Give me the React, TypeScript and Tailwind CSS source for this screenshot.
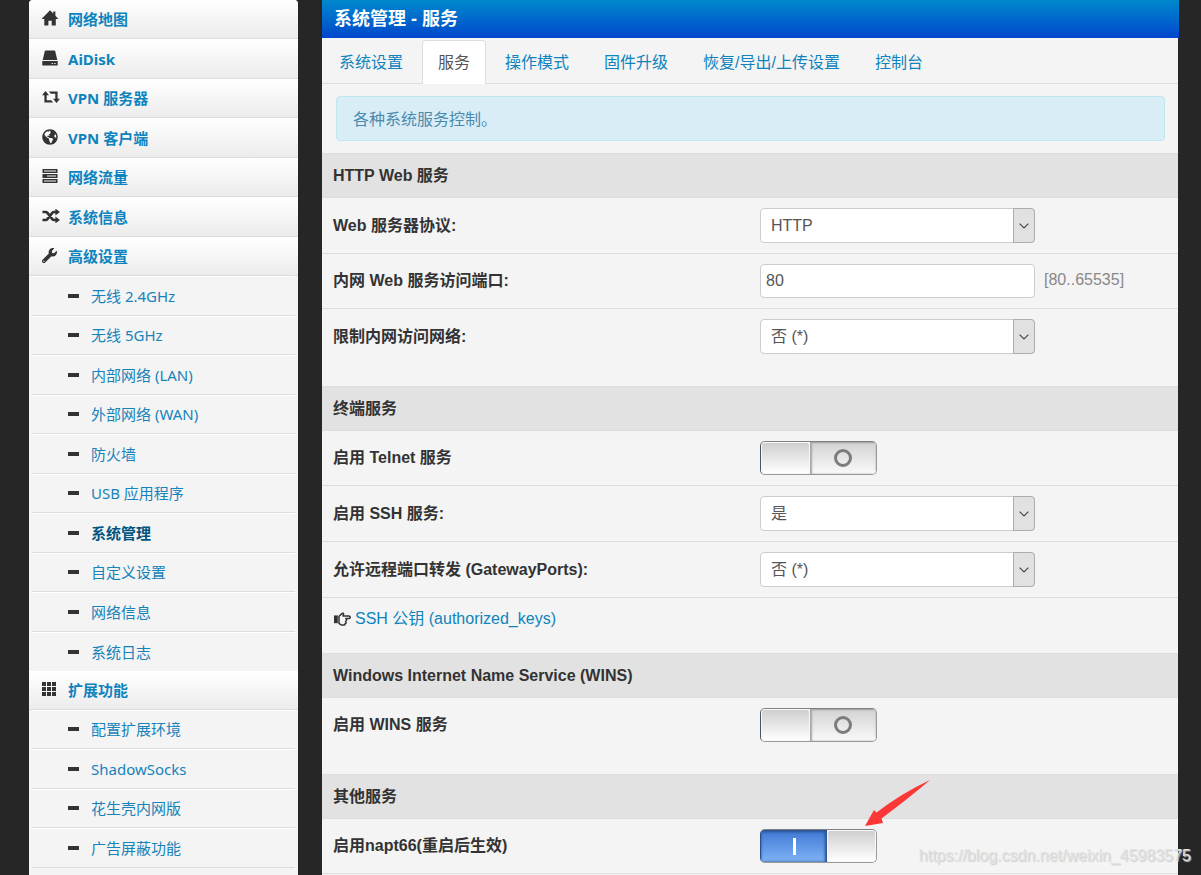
import React from 'react';
import { FaGlobeAmericas, FaWrench } from 'react-icons/fa';

const mainFont = "font-['Liberation_Sans','Noto_Sans_CJK_SC',sans-serif]";
const sideFont = "font-['Noto_Sans','Noto_Sans_CJK_SC',sans-serif]";

function HomeIcon() {
  return (
    <svg viewBox="0 0 16 16" className="h-4 w-4" fill="#333" aria-hidden="true">
      <path d="M8 .3 11.2 3.5V1.4h2.2v4.3L16 8.4V9h-2.2v6.6H9.7v-4.8H6.4v4.8H2.3V9H0v-.6z" />
    </svg>
  );
}

function DiskIcon() {
  return (
    <svg viewBox="0 0 16 16" className="h-4 w-4" fill="#333" aria-hidden="true">
      <path d="M2.8 1.2Q3 .5 3.6.5h8.8q.6 0 .8.7L15.3 10H.7z" />
      <path fillRule="evenodd" d="M.3 11h15.4v4.6H.3zM9.7 12.9v1.1h1.3v-1.1zM12.3 12.9v1.1h1.3v-1.1z" />
    </svg>
  );
}

function RetweetIcon() {
  return (
    <svg viewBox="0 0 18 12" className="h-3 w-[18px]" fill="#333" aria-hidden="true">
      <path d="M3.5 0 7 4.2H4.7v5h4.6l1.8 2.3H2.4V4.2H0z" />
      <path d="M14.5 12 11 7.8h2.3v-5H8.7L6.9.5h8.7v7.3H18z" />
    </svg>
  );
}

function BarsIcon() {
  return (
    <svg viewBox="0 0 16 16" className="h-4 w-4" fill="#333" aria-hidden="true">
      <path fillRule="evenodd" d="M.5 1h15v4H.5zM2 2.6v.8h12v-.8zM.5 6h15v4H.5zM5 7.6v.8h9v-.8zM.5 11h15v4H.5zM2 12.6v.8h12v-.8z" />
    </svg>
  );
}

function ShuffleIcon() {
  return (
    <svg viewBox="0 0 18 14" className="h-[14px] w-[18px]" aria-hidden="true">
      <path d="M.5 3h3.2q1 0 1.7.9l4.9 6.2q.7.9 1.7.9h2.5M.5 11h3.2q1 0 1.7-.9l4.9-6.2q.7-.9 1.7-.9h2.5" fill="none" stroke="#333" strokeWidth="2.6" />
      <path d="M13.4-.4 18 3.1l-4.6 3.5zM13.4 7.4 18 10.9l-4.6 3.5z" fill="#333" />
    </svg>
  );
}

function GridIcon() {
  return (
    <svg viewBox="0 0 16 16" className="h-4 w-4" fill="#333" aria-hidden="true">
      <path d="M0 1h4v4H0zM5 1h4v4H5zM10 1h4v4h-4zM0 6h4v4H0zM5 6h4v4H5zM10 6h4v4h-4zM0 11h4v4H0zM5 11h4v4H5zM10 11h4v4h-4z" />
    </svg>
  );
}

function HandIcon() {
  return (
    <svg viewBox="0 0 17 14" className="h-[14px] w-[17px]" aria-hidden="true">
      <path d="M0 3.4h3.8v7.8H0z" fill="#333" />
      <path
        d="M5 4.2 8.2 1.4Q9.4.7 9.6 2.1L9 4h6q1.2.2 1.2 1.3T15 6.6h-3.2q1 .3.8 1.4t-1 1.2q.7.3.5 1.3t-1 1.1q.2 1.4-1.3 1.4H7.2L5 11.4z"
        fill="#f4f4f4"
        stroke="#333"
        strokeWidth="1.5"
        strokeLinejoin="round"
      />
    </svg>
  );
}

const topItems = [
  { label: '网络地图', icon: <HomeIcon /> },
  { label: 'AiDisk', icon: <DiskIcon /> },
  { label: 'VPN 服务器', icon: <RetweetIcon /> },
  { label: 'VPN 客户端', icon: <FaGlobeAmericas size={16} /> },
  { label: '网络流量', icon: <BarsIcon /> },
  { label: '系统信息', icon: <ShuffleIcon /> },
  { label: '高级设置', icon: <FaWrench size={15} /> },
];

const advancedItems = [
  '无线 2.4GHz',
  '无线 5GHz',
  '内部网络 (LAN)',
  '外部网络 (WAN)',
  '防火墙',
  'USB 应用程序',
  '系统管理',
  '自定义设置',
  '网络信息',
  '系统日志',
];

const extensionItems = ['配置扩展环境', 'ShadowSocks', '花生壳内网版', '广告屏蔽功能'];

function TopLink({ label, icon }: { label: string; icon: React.ReactNode }) {
  return (
    <a
      href="#"
      className="flex h-full items-center border-b border-[#dcdcdc] bg-linear-to-b from-white to-[#ececec] pl-[13px] text-[15px] font-bold text-[#0e83bd]"
    >
      <span className="flex w-[26px] items-center pb-[2px] text-[#333]">{icon}</span>
      {label}
    </a>
  );
}

function SubLink({ label, last }: { label: string; last?: boolean }) {
  const active = label === '系统管理';
  return (
    <a
      href="#"
      className={
        'flex h-full items-center border-t border-t-white pb-px pl-9 text-[15px] ' +
        (last ? '' : 'border-b border-b-[#dcdcdc] ') +
        (active ? 'font-bold text-[#005580]' : 'text-[#1683bb]')
      }
    >
      <span className="mr-3 h-1 w-[11px] bg-[#333]" />
      {label}
    </a>
  );
}

function Sidebar() {
  return (
    <nav className={'w-[269px] shrink-0 rounded-t bg-[#f4f4f4] ' + sideFont}>
      <ul className="overflow-hidden rounded-t">
        {topItems.map((item) => (
          <li key={item.label} className="odd:h-[39px] even:h-10">
            <TopLink {...item} />
          </li>
        ))}
      </ul>
      <ul className="px-[3px]">
        {advancedItems.map((label, i) => (
          <li key={label} className="odd:h-10 even:h-[39px] last:h-[38px]">
            <SubLink label={label} last={i === advancedItems.length - 1} />
          </li>
        ))}
      </ul>
      <div className="h-[39px]">
        <TopLink label="扩展功能" icon={<GridIcon />} />
      </div>
      <ul className="px-[3px]">
        {extensionItems.map((label) => (
          <li key={label} className="odd:h-[39px] even:h-10">
            <SubLink label={label} />
          </li>
        ))}
      </ul>
    </nav>
  );
}

const tabs = ['系统设置', '服务', '操作模式', '固件升级', '恢复/导出/上传设置', '控制台'];

function Tabs() {
  return (
    <ul className="flex h-[46px] items-end gap-[3px] border-b border-[#ddd] pl-px">
      {tabs.map((tab) => (
        <li key={tab} className={tab === '服务' ? '-mb-px' : ''}>
          <a
            href="#"
            className={
              'flex h-11 items-center rounded-t border border-b-0 px-[15px] ' +
              (tab === '服务' ? 'border-[#ddd] bg-white text-[#555]' : 'border-transparent pt-[2px] text-[#0e83bd]')
            }
          >
            {tab}
          </a>
        </li>
      ))}
    </ul>
  );
}

function Section({ title, children }: { title: string; children: React.ReactNode }) {
  return (
    <section className="mb-[22px] last:mb-0">
      <h2 className="flex h-11 items-center border-t border-[#ddd] bg-[#e2e2e2] pl-[11px] font-bold">{title}</h2>
      {children}
    </section>
  );
}

function Row({ label, htmlFor, children }: { label: string; htmlFor: string; children: React.ReactNode }) {
  return (
    <div className="grid grid-cols-2 items-center border-t border-[#ddd] py-[10px]">
      <label htmlFor={htmlFor} className="pl-[11px] font-bold">
        {label}
      </label>
      <div className="flex items-center pl-[10px]">{children}</div>
    </div>
  );
}

function Select({ id, options }: { id: string; options: string[] }) {
  return (
    <div className="relative w-[275px]">
      <select
        id={id}
        className="block h-[35px] w-full appearance-none rounded border border-[#ccc] bg-white pl-[10px] pr-7 text-[#555]"
      >
        {options.map((o) => (
          <option key={o}>{o}</option>
        ))}
      </select>
      <span className="pointer-events-none absolute inset-y-0 right-0 flex w-[22px] items-center justify-center rounded-r border border-[#adadad] bg-[#e1e1e1]">
        <svg viewBox="0 0 10 6" className="h-[6px] w-[10px]" fill="none" stroke="#444" strokeWidth="1.1" aria-hidden="true">
          <path d="M.6.6 5 5 9.4.6" />
        </svg>
      </span>
    </div>
  );
}

function Switch({ id, on }: { id: string; on?: boolean }) {
  const knob = 'h-full w-[49px] shrink-0 rounded-[3px] border border-[#f8f8f8] bg-linear-to-b from-[#cfcfcf] to-white ';
  return (
    <label
      htmlFor={id}
      className={
        'relative flex h-[34px] w-[117px] overflow-hidden rounded-[5px] border border-[#999] border-t-[#808080] ' +
        (on ? 'border-l-[#2b4f8c]' : 'border-l-[#456]')
      }
    >
      <input id={id} type="checkbox" defaultChecked={on} className="sr-only" />
      {on ? (
        <>
          <span className="flex h-full flex-1 items-center justify-center bg-linear-to-b from-[#3f78d4] to-[#80b3f6] shadow-[inset_0_2px_3px_#2c5292,inset_-2px_0_3px_#2c5292]">
            <span className="h-[17px] w-[3px] bg-white" />
          </span>
          <span className={knob} />
        </>
      ) : (
        <>
          <span className={knob} />
          <span className="flex h-full flex-1 items-center justify-center bg-linear-to-b from-[#d2d2d2] to-[#fafafa] shadow-[inset_0_1px_2px_#a0a0a0,inset_2px_0_2px_#a8a8a8]">
            <span className="h-[18px] w-[18px] rounded-full border-3 border-[#7c7c7c]" />
          </span>
        </>
      )}
    </label>
  );
}

function MarkerArrow() {
  return (
    <svg viewBox="0 0 68 48" className="pointer-events-none absolute bottom-9 left-[104px] h-12 w-[68px]" fill="#fb3737" aria-hidden="true">
      <path d="M1 47 10 31 12.5 33.5Q38 14 66 1 45 19 17.5 39.5L19 44z" />
    </svg>
  );
}

export default function App() {
  return (
    <div className={'relative flex min-h-screen gap-6 overflow-hidden bg-[#262626] pl-[29px] pr-[22px] text-base leading-6 text-[#333] ' + mainFont}>
      <Sidebar />
      <main className="min-w-0 flex-1">
        <h1 className="flex h-[38px] items-center bg-linear-to-b from-[#0088cc] to-[#0044cc] pl-3 text-lg font-bold text-white">
          系统管理 - 服务
        </h1>
        <div className="mr-px min-h-[calc(100vh-38px)] bg-[#f4f4f4]">
          <Tabs />
          <div className="py-3 pl-[14px] pr-[13px]">
            <p className="flex h-[45px] items-center rounded border border-[#bce8f1] bg-[#d9edf7] pl-4 pt-[2px] text-[#4a8aad]">
              各种系统服务控制。
            </p>
          </div>
          <Section title="HTTP Web 服务">
            <Row label="Web 服务器协议:" htmlFor="protocol">
              <Select id="protocol" options={['HTTP', 'HTTPS']} />
            </Row>
            <Row label="内网 Web 服务访问端口:" htmlFor="port">
              <input
                id="port"
                type="text"
                defaultValue="80"
                className="h-[34px] w-[275px] rounded border border-[#ccc] bg-white px-[5px] text-[#555]"
              />
              <span className="ml-[9px] pb-[2px] text-[#888]">[80..65535]</span>
            </Row>
            <Row label="限制内网访问网络:" htmlFor="restrict">
              <Select id="restrict" options={['否 (*)', '是']} />
            </Row>
          </Section>
          <Section title="终端服务">
            <Row label="启用 Telnet 服务" htmlFor="telnet">
              <Switch id="telnet" />
            </Row>
            <Row label="启用 SSH 服务:" htmlFor="ssh">
              <Select id="ssh" options={['是', '否']} />
            </Row>
            <Row label="允许远程端口转发 (GatewayPorts):" htmlFor="gateway">
              <Select id="gateway" options={['否 (*)', '是']} />
            </Row>
            <div className="flex h-[34px] items-end border-t border-[#ddd] pl-3">
              <a href="#" className="flex items-center gap-1 text-[#0e83bd]">
                <HandIcon />
                SSH 公钥 (authorized_keys)
              </a>
            </div>
          </Section>
          <Section title="Windows Internet Name Service (WINS)">
            <Row label="启用 WINS 服务" htmlFor="wins">
              <Switch id="wins" />
            </Row>
          </Section>
          <Section title="其他服务">
            <Row label="启用napt66(重启后生效)" htmlFor="napt">
              <div className="relative">
                <Switch id="napt" on />
                <MarkerArrow />
              </div>
            </Row>
            <div className="border-t border-[#ddd]" />
          </Section>
        </div>
      </main>
      <span className="pointer-events-none absolute bottom-[7px] right-[10px] text-[#e2e2e2] [text-shadow:1px_1px_1px_#cccccc]">
        https://blog.csdn.net/weixin_45983575
      </span>
    </div>
  );
}
